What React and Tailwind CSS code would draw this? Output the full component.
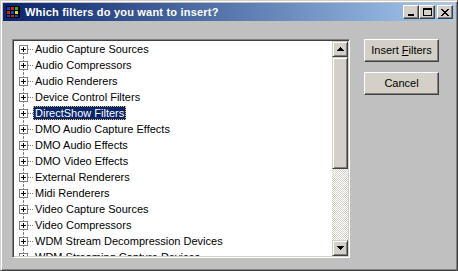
import React from "react";

const items = [
  "Audio Capture Sources",
  "Audio Compressors",
  "Audio Renderers",
  "Device Control Filters",
  "DirectShow Filters",
  "DMO Audio Capture Effects",
  "DMO Audio Effects",
  "DMO Video Effects",
  "External Renderers",
  "Midi Renderers",
  "Video Capture Sources",
  "Video Compressors",
  "WDM Stream Decompression Devices",
  "WDM Streaming Capture Devices",
];

function TitleIcon() {
  return (
    <svg width="16" height="16" viewBox="0 0 16 16" shapeRendering="crispEdges">
      <rect x="1" y="2" width="14" height="12" fill="#000" />
      <rect x="2" y="3" width="3" height="3" fill="#1a3cd8" />
      <rect x="6" y="3" width="3" height="3" fill="#d81a1a" />
      <rect x="10" y="3" width="3" height="3" fill="#1ab81a" />
      <rect x="2" y="7" width="3" height="3" fill="#d81a1a" />
      <rect x="6" y="7" width="3" height="3" fill="#1a3cd8" />
      <rect x="10" y="7" width="3" height="3" fill="#e8d81a" />
      <rect x="2" y="11" width="3" height="2" fill="#1a3cd8" />
      <rect x="6" y="11" width="3" height="2" fill="#d81a1a" />
      <rect x="10" y="11" width="3" height="2" fill="#1a3cd8" />
    </svg>
  );
}

function CapButton({ children, className = "" }) {
  return (
    <div
      className={
        "w-[16px] h-[14px] bg-[#d4d0c8] border border-t-white border-l-white border-b-[#404040] border-r-[#404040] shadow-[inset_-1px_-1px_0_#808080] flex items-center justify-center " +
        className
      }
    >
      {children}
    </div>
  );
}

function ScrollBtn({ up }) {
  return (
    <div className="w-[16px] h-[16px] shrink-0 bg-[#d4d0c8] border border-t-[#d4d0c8] border-l-[#d4d0c8] border-b-[#404040] border-r-[#404040] shadow-[inset_1px_1px_0_#fff,inset_-1px_-1px_0_#808080] flex items-center justify-center">
      <svg width="7" height="4" viewBox="0 0 7 4" shapeRendering="crispEdges">
        {up ? (
          <path d="M3 0h1v1h1v1h1v1h1v1H0V3h1V2h1V1h1z" fill="#000" />
        ) : (
          <path d="M0 0h7v1H6v1H5v1H4v1H3V3H2V2H1V1H0z" fill="#000" />
        )}
      </svg>
    </div>
  );
}

function Row({ label, first, selected }) {
  return (
    <div className="h-[16px] flex items-stretch shrink-0">
      <div className="w-[5px] shrink-0" />
      <div className="w-[9px] shrink-0 flex flex-col items-center">
        <div className={"h-[4px] w-0 " + (first ? "" : "border-l border-dotted border-[#808080]")} />
        <div className="w-[9px] h-[9px] border border-[#808080] bg-white relative shrink-0">
          <div className="absolute left-[1px] top-[3px] w-[5px] h-[1px] bg-black" />
          <div className="absolute left-[3px] top-[1px] w-[1px] h-[5px] bg-black" />
        </div>
        <div className="flex-1 w-0 border-l border-dotted border-[#808080]" />
      </div>
      <div className="w-[5px] shrink-0 flex items-center">
        <div className="w-[5px] h-0 border-t border-dotted border-[#808080]" />
      </div>
      <div className="flex items-center">
        <div
          className={
            "h-[14px] px-[1px] flex items-center whitespace-nowrap border border-dotted " +
            (selected
              ? "bg-[#0a246a] text-white border-[#e0c060]"
              : "text-black border-transparent")
          }
        >
          {label}
        </div>
      </div>
    </div>
  );
}

function PushButton({ children }) {
  return (
    <div className="w-[75px] h-[23px] bg-[#d4d0c8] border border-t-white border-l-white border-b-[#404040] border-r-[#404040] shadow-[inset_-1px_-1px_0_#808080] flex items-center justify-center text-black whitespace-pre">
      {children}
    </div>
  );
}

export default function App() {
  return (
    <div
      className="w-[458px] h-[271px] bg-[#c0c0c0] border border-t-[#d4d0c8] border-l-[#d4d0c8] border-b-[#404040] border-r-[#404040] shadow-[inset_1px_1px_0_#fff,inset_-1px_-1px_0_#808080] p-[2px] flex flex-col overflow-hidden text-[11px] leading-none"
      style={{ fontFamily: '"Liberation Sans", Arial, sans-serif' }}
    >
      <div className="h-[18px] shrink-0 bg-[linear-gradient(to_right,#0a246a,#a6caf0)] flex items-center pl-[2px] pr-[2px]">
        <TitleIcon />
        <div className="ml-[4px] text-white font-bold text-[11px] tracking-[0.2px] whitespace-nowrap">
          Which filters do you want to insert?
        </div>
        <div className="flex-1" />
        <CapButton>
          <div className="w-[6px] h-[2px] bg-black mt-[6px] mr-[1px]" />
        </CapButton>
        <CapButton>
          <div className="w-[9px] h-[8px] border border-black border-t-2 mb-[1px]" />
        </CapButton>
        <CapButton className="ml-[2px]">
          <svg width="8" height="7" viewBox="0 0 8 7" shapeRendering="crispEdges">
            <path
              d="M0 0h2v1h1v1h2V1h1V0h2v1H7v1H6v1H5v1h1v1h1v1h1v1H6V6H5V5H3v1H2v1H0V6h1V5h1V4h1V3H2V2H1V1H0z"
              fill="#000"
            />
          </svg>
        </CapButton>
      </div>
      <div className="flex pl-[9px] pt-[18px]">
        <div className="w-[338px] h-[219px] shrink-0 border border-t-[#808080] border-l-[#808080] border-b-white border-r-white shadow-[inset_1px_1px_0_#404040,inset_-1px_-1px_0_#d4d0c8] p-[1px] flex">
          <div className="flex-1 bg-white overflow-hidden flex flex-col">
            {items.map((it, i) => (
              <Row key={it} label={it} first={i === 0} selected={i === 4} />
            ))}
          </div>
          <div className="w-[16px] flex flex-col bg-white">
            <ScrollBtn up />
            <div className="h-[112px] shrink-0 bg-[#d4d0c8] border border-t-[#d4d0c8] border-l-[#d4d0c8] border-b-[#404040] border-r-[#404040] shadow-[inset_1px_1px_0_#fff,inset_-1px_-1px_0_#808080]" />
            <div className="flex-1 bg-[repeating-conic-gradient(#d4d0c8_0_25%,#ffffff_0_50%)] bg-[length:2px_2px]" />
            <ScrollBtn />
          </div>
        </div>
        <div className="ml-[14px] flex flex-col gap-[10px]">
          <PushButton>
            {"Insert "}
            <span className="underline">F</span>
            {"ilters"}
          </PushButton>
          <PushButton>Cancel</PushButton>
        </div>
      </div>
    </div>
  );
}
